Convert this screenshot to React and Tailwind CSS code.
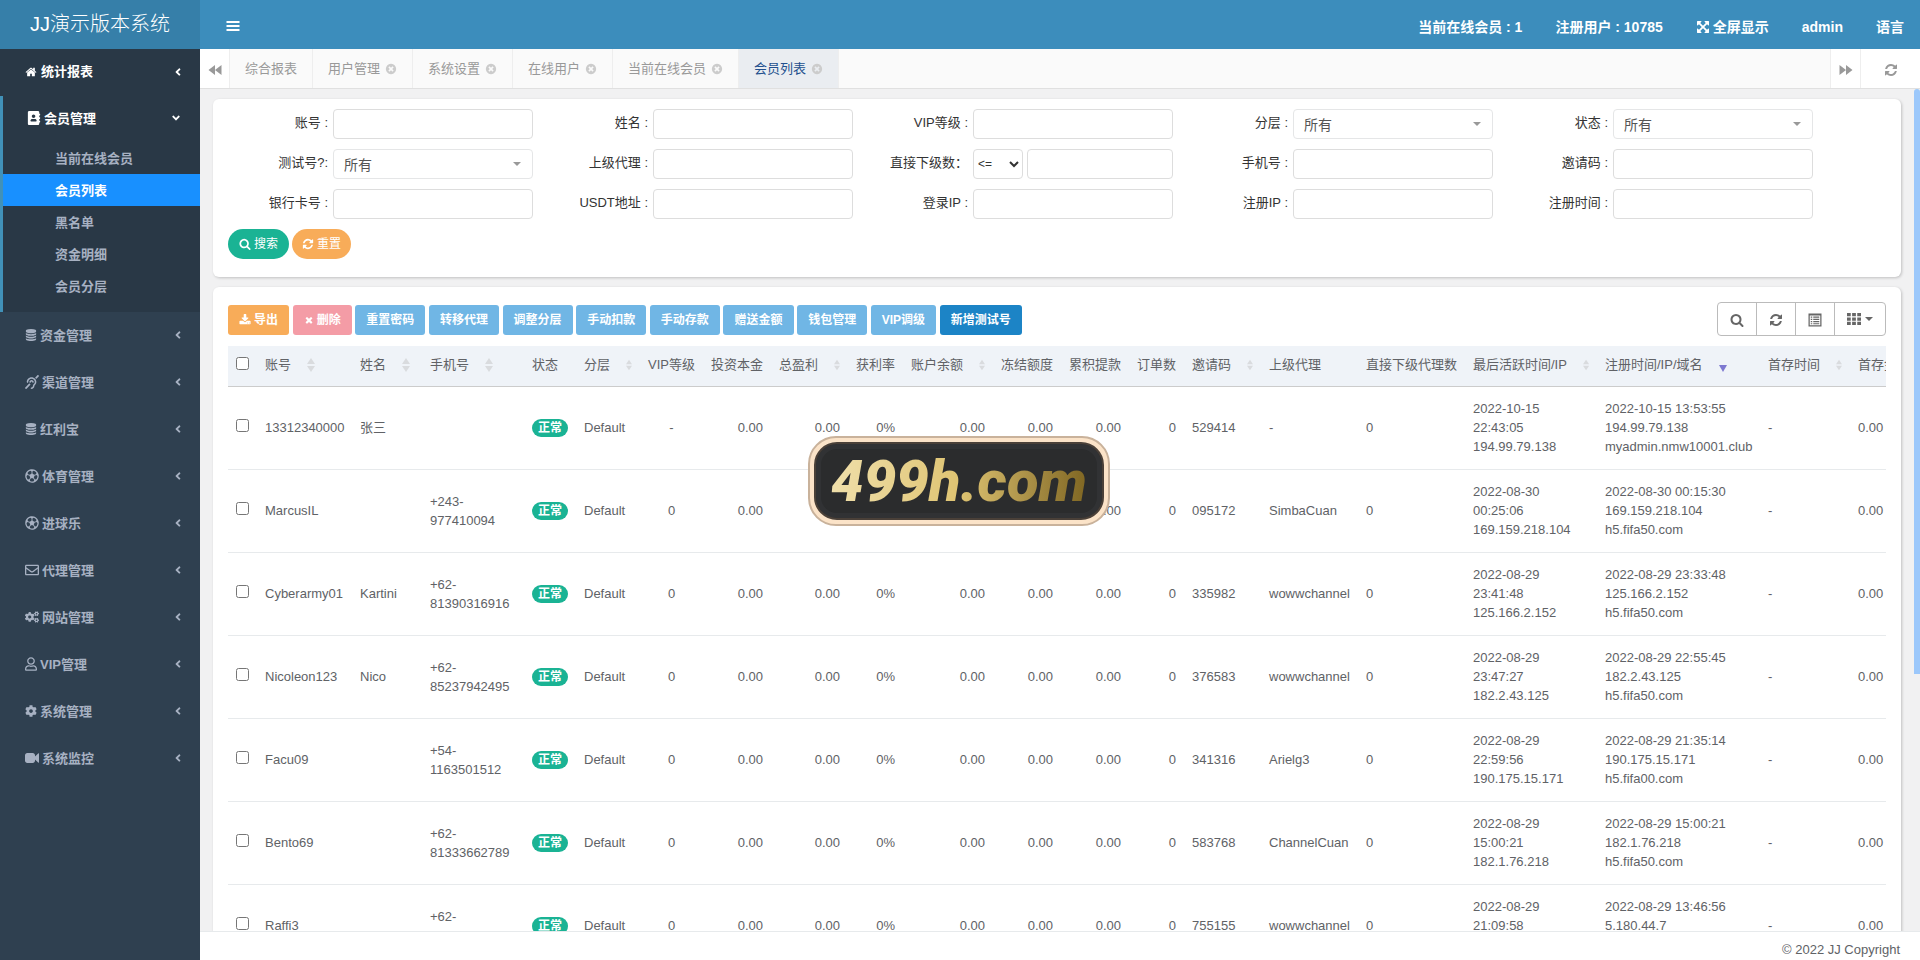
import { clsx } from 'clsx';
import {
  FaAddressBook, FaAngleDown, FaAngleLeft, FaCog, FaCogs, FaDeaf, FaRegEnvelope, FaRegFutbol, FaRegUser,
} from 'react-icons/fa';

const PATHS = {
  home: 'M1472 992v480q0 26-19 45t-45 19h-384v-384h-256v384h-384q-26 0-45-19t-19-45v-480q0-1 .5-3t.5-3l575-474 575 474q1 2 1 6zm223-69l-62 74q-8 9-21 11h-3q-13 0-21-7l-692-577-692 577q-12 8-24 7-13-2-21-11l-62-74q-8-10-7-23.5t11-21.5l719-599q32-26 76-26t76 26l244 204v-195q0-14 9-23t23-9h192q14 0 23 9t9 23v408l219 182q10 8 11 21.5t-7 23.5z',
  refresh: 'M1639 1056q0 5-1 7-64 268-268 434.5t-478 166.5q-146 0-282.5-55t-243.5-157l-129 129q-19 19-45 19t-45-19-19-45v-448q0-26 19-45t45-19h448q26 0 45 19t19 45-19 45l-137 137q71 66 161 102t187 36q134 0 250-65t186-179q11-17 53-117 8-23 30-23h192q13 0 22.5 9.5t9.5 22.5zm25-800v448q0 26-19 45t-45 19h-448q-26 0-45-19t-19-45 19-45l138-138q-148-137-349-137-134 0-250 65t-186 179q-11 17-53 117-8 23-30 23h-199q-13 0-22.5-9.5t-9.5-22.5v-7q65-268 270-434.5t480-166.5q146 0 284 55.5t245 156.5l130-129q19-19 45-19t45 19 19 45z',
  search: 'M1216 832q0-185-131.5-316.5t-316.5-131.5-316.5 131.5-131.5 316.5 131.5 316.5 316.5 131.5 316.5-131.5 131.5-316.5zm512 832q0 52-38 90t-90 38q-54 0-90-38l-343-342q-179 124-399 124-143 0-273.5-55.5t-225-150-150-225-55.5-273.5 55.5-273.5 150-225 225-150 273.5-55.5 273.5 55.5 225 150 150 225 55.5 273.5q0 220-124 399l343 343q37 37 37 90z',
  times: 'M1490 1322q0 40-28 68l-136 136q-28 28-68 28t-68-28l-294-294-294 294q-28 28-68 28t-68-28l-136-136q-28-28-28-68t28-68l294-294-294-294q-28-28-28-68t28-68l136-136q28-28 68-28t68 28l294 294 294-294q28-28 68-28t68 28l136 136q28 28 28 68t-28 68l-294 294 294 294q28 28 28 68z',
  timesCircle: 'M1277 1122q0-26-19-45l-181-181 181-181q19-19 19-45 0-27-19-46l-90-90q-19-19-46-19-26 0-45 19l-181 181-181-181q-19-19-45-19-27 0-46 19l-90 90q-19 19-19 46 0 26 19 45l181 181-181 181q-19 19-19 45 0 27 19 46l90 90q19 19 46 19 26 0 45-19l181-181 181 181q19 19 45 19 27 0 46-19l90-90q19-19 19-46zm387-226q0 209-103 385.5t-279.5 279.5-385.5 103-385.5-103-279.5-279.5-103-385.5 103-385.5 279.5-279.5 385.5-103 385.5 103 279.5 279.5 103 385.5z',
  download: 'M1344 1344q0-26-19-45t-45-19-45 19-19 45 19 45 45 19 45-19 19-45zm256 0q0-26-19-45t-45-19-45 19-19 45 19 45 45 19 45-19 19-45zm128-224v320q0 40-28 68t-68 28h-1472q-40 0-68-28t-28-68v-320q0-40 28-68t68-28h465l135 136q58 56 136 56t136-56l136-136h464q40 0 68 28t28 68zm-325-569q17 41-14 70l-448 448q-18 19-45 19t-45-19l-448-448q-31-29-14-70 17-39 59-39h256v-448q0-26 19-45t45-19h256q26 0 45 19t19 45v448h256q42 0 59 39z',
  database: 'M896 768q237 0 443-43t325-127v170q0 69-103 128t-280 93.5-385 34.5-385-34.5-280-93.5-103-128v-170q119 84 325 127t443 43zm0 768q237 0 443-43t325-127v170q0 69-103 128t-280 93.5-385 34.5-385-34.5-280-93.5-103-128v-170q119 84 325 127t443 43zm0-384q237 0 443-43t325-127v170q0 69-103 128t-280 93.5-385 34.5-385-34.5-280-93.5-103-128v-170q119 84 325 127t443 43zm0-1152q208 0 385 34.5t280 93.5 103 128v128q0 69-103 128t-280 93.5-385 34.5-385-34.5-280-93.5-103-128v-128q0-69 103-128t280-93.5 385-34.5z',
  arrowsAlt: 'M1411 541l-355 355 355 355 144-144q29-31 70-14 39 17 39 59v448q0 26-19 45t-45 19h-448q-42 0-59-40-17-39 14-69l144-144-355-355-355 355 144 144q31 30 14 69-17 40-59 40h-448q-26 0-45-19t-19-45v-448q0-42 40-59 39-17 69 14l144 144 355-355-355-355-144 144q-19 19-45 19-12 0-24-5-40-17-40-59v-448q0-26 19-45t45-19h448q42 0 59 40 17 39-14 69l-144 144 355 355 355-355-144-144q-31-30-14-69 17-40 59-40h448q26 0 45 19t19 45v448q0 42-39 59-13 5-25 5-26 0-45-19z',
  video: 'M1792 352v1088q0 42-39 59-13 5-25 5-27 0-45-19l-403-403v166q0 119-84.5 203.5t-203.5 84.5h-704q-119 0-203.5-84.5t-84.5-203.5v-704q0-119 84.5-203.5t203.5-84.5h704q119 0 203.5 84.5t84.5 203.5v165l403-402q18-19 45-19 12 0 25 5 39 17 39 59z',
  backward: 'M896 256v1280l-832-640zM1728 256v1280l-832-640z',
  forward: 'M64 256v1280l832-640zM896 256v1280l832-640z',
  bars: 'M64 256h1664v256h-1664zM64 768h1664v256h-1664zM64 1280h1664v256h-1664z',
  th: 'M0 128h480v416h-480zM656 128h480v416h-480zM1312 128h480v416h-480zM0 688h480v416h-480zM656 688h480v416h-480zM1312 688h480v416h-480zM0 1248h480v416h-480zM656 1248h480v416h-480zM1312 1248h480v416h-480z',
  listAlt: 'M64 64h1664v1664h-1664zM224 320v1248h1344v-1248zM352 448h192v160h-192zM672 448h768v160h-768zM352 736h192v160h-192zM672 736h768v160h-768zM352 1024h192v160h-192zM672 1024h768v160h-768zM352 1312h192v128h-192zM672 1312h768v128h-768z',
};

const Icon = ({ name, className }) => (
  <svg viewBox="0 0 1792 1792" fill="currentColor" fillRule={name === 'listAlt' ? 'evenodd' : 'nonzero'} className={clsx('inline-block shrink-0', className)} aria-hidden="true">
    <path d={PATHS[name]} />
  </svg>
);

const Caret = ({ className }) => (
  <svg viewBox="0 0 8 4" fill="currentColor" className={clsx('w-2 h-1', className)} aria-hidden="true">
    <path d="M0 0h8L4 4z" />
  </svg>
);

const subMenu = ['当前在线会员', '会员列表', '黑名单', '资金明细', '会员分层'];

const menu = [
  { label: '资金管理', icon: <Icon name="database" className="w-3 h-3.5" /> },
  { label: '渠道管理', icon: <FaDeaf className="w-3.5 h-3.5" /> },
  { label: '红利宝', icon: <Icon name="database" className="w-3 h-3.5" /> },
  { label: '体育管理', icon: <FaRegFutbol className="w-3.5 h-3.5" /> },
  { label: '进球乐', icon: <FaRegFutbol className="w-3.5 h-3.5" /> },
  { label: '代理管理', icon: <FaRegEnvelope className="w-3.5 h-3.5" /> },
  { label: '网站管理', icon: <FaCogs className="w-3.5 h-3.5" /> },
  { label: 'VIP管理', icon: <FaRegUser className="w-3 h-3.5" /> },
  { label: '系统管理', icon: <FaCog className="w-3 h-3" /> },
  { label: '系统监控', icon: <Icon name="video" className="w-3.5 h-3.5" /> },
];

const tabs = ['综合报表', '用户管理', '系统设置', '在线用户', '当前在线会员', '会员列表'];

const fields = [
  { label: '账号 :' },
  { label: '姓名 :' },
  { label: 'VIP等级 :' },
  { label: '分层 :', type: 'select' },
  { label: '状态 :', type: 'select' },
  { label: '测试号?:', type: 'select' },
  { label: '上级代理 :' },
  { label: '直接下级数：', type: 'compare' },
  { label: '手机号 :' },
  { label: '邀请码 :' },
  { label: '银行卡号 :' },
  { label: 'USDT地址 :' },
  { label: '登录IP :' },
  { label: '注册IP :' },
  { label: '注册时间 :' },
];

const bulkActions = ['重置密码', '转移代理', '调整分层', '手动扣款', '手动存款', '赠送金额', '钱包管理', 'VIP调级'];

const columns = [
  { key: 'account', title: '账号', width: 95, sort: 'both' },
  { key: 'name', title: '姓名', width: 70, sort: 'both' },
  { key: 'phone', title: '手机号', width: 102, sort: 'both' },
  { key: 'status', title: '状态', width: 52 },
  { key: 'level', title: '分层', width: 64, sort: 'both' },
  { key: 'vip', title: 'VIP等级', width: 63, align: 'text-center' },
  { key: 'principal', title: '投资本金', width: 68, align: 'text-right' },
  { key: 'profit', title: '总盈利', width: 77, align: 'text-right', sort: 'both' },
  { key: 'rate', title: '获利率', width: 55, align: 'text-right' },
  { key: 'balance', title: '账户余额', width: 90, align: 'text-right', sort: 'both' },
  { key: 'frozen', title: '冻结额度', width: 68, align: 'text-right' },
  { key: 'withdrawn', title: '累积提款', width: 68, align: 'text-right' },
  { key: 'orders', title: '订单数', width: 55, align: 'text-right' },
  { key: 'code', title: '邀请码', width: 77, sort: 'both' },
  { key: 'agent', title: '上级代理', width: 97 },
  { key: 'subs', title: '直接下级代理数', width: 107 },
  { key: 'active', title: '最后活跃时间/IP', width: 132, sort: 'both' },
  { key: 'registered', title: '注册时间/IP/域名', width: 163, sort: 'desc' },
  { key: 'firstTime', title: '首存时间', width: 90, sort: 'both' },
  { key: 'firstAmount', title: '首存金额', width: 90 },
];

const base = {
  phone: '', name: '', vip: '0', level: 'Default', principal: '0.00', profit: '0.00', rate: '0%', balance: '0.00',
  frozen: '0.00', withdrawn: '0.00', orders: '0', subs: '0', firstTime: '-', firstAmount: '0.00',
};

const rows = [
  { ...base, account: '13312340000', name: '张三', vip: '-', code: '529414', agent: '-', active: '2022-10-15\n22:43:05\n194.99.79.138', registered: '2022-10-15 13:53:55\n194.99.79.138\nmyadmin.nmw10001.club' },
  { ...base, account: 'MarcusIL', phone: '+243-\n977410094', code: '095172', agent: 'SimbaCuan', active: '2022-08-30\n00:25:06\n169.159.218.104', registered: '2022-08-30 00:15:30\n169.159.218.104\nh5.fifa50.com' },
  { ...base, account: 'Cyberarmy01', name: 'Kartini', phone: '+62-\n81390316916', code: '335982', agent: 'wowwchannel', active: '2022-08-29\n23:41:48\n125.166.2.152', registered: '2022-08-29 23:33:48\n125.166.2.152\nh5.fifa50.com' },
  { ...base, account: 'Nicoleon123', name: 'Nico', phone: '+62-\n85237942495', code: '376583', agent: 'wowwchannel', active: '2022-08-29\n23:47:27\n182.2.43.125', registered: '2022-08-29 22:55:45\n182.2.43.125\nh5.fifa50.com' },
  { ...base, account: 'Facu09', phone: '+54-\n1163501512', code: '341316', agent: 'Arielg3', active: '2022-08-29\n22:59:56\n190.175.15.171', registered: '2022-08-29 21:35:14\n190.175.15.171\nh5.fifa00.com' },
  { ...base, account: 'Bento69', phone: '+62-\n81333662789', code: '583768', agent: 'ChannelCuan', active: '2022-08-29\n15:00:21\n182.1.76.218', registered: '2022-08-29 15:00:21\n182.1.76.218\nh5.fifa50.com' },
  { ...base, account: 'Raffi3', phone: '+62-\n81382042424', code: '755155', agent: 'wowwchannel', active: '2022-08-29\n21:09:58\n5.180.44.7', registered: '2022-08-29 13:46:56\n5.180.44.7\nh5.fifa50.com' },
];

const Sidebar = () => (
  <aside className="w-[200px] shrink-0 bg-[#2f4050] text-[#a7b1c2] font-bold">
    <a href="#" className="flex items-center justify-center h-[49px] pb-0.5 bg-[#367fa9] text-white text-xl font-light">JJ演示版本系统</a>
    <nav>
      <a href="#" className="flex items-center h-[47px] pl-[25px] pr-[18px] pb-0.5 bg-[#293846] text-white">
        <Icon name="home" className="w-3 h-3.5 mr-1" />
        统计报表
        <FaAngleLeft className="w-2 h-3 ml-auto" />
      </a>
      <div className="border-l-[3px] border-[#4191b8] bg-[#293846] pb-2.5">
        <a href="#" className="flex items-center h-[46px] pl-6 pr-[18px] pb-0.5 text-white">
          <FaAddressBook className="w-3.5 h-3.5 mr-[3px]" />
          会员管理
          <FaAngleDown className="w-3 h-3 ml-auto" />
        </a>
        {subMenu.map((item) => (
          <a
            key={item}
            href="#"
            className={clsx('flex items-center h-8 pl-[52px]', item === '会员列表' && 'bg-[#1890ff] text-white')}
          >
            {item}
          </a>
        ))}
      </div>
      {menu.map(({ label, icon }) => (
        <a key={label} href="#" className="flex items-center gap-[3px] h-[47px] pl-[25px] pr-[18px] pb-px">
          {icon}
          {label}
          <FaAngleLeft className="w-2 h-3 ml-auto" />
        </a>
      ))}
    </nav>
  </aside>
);

const Header = () => (
  <header className="flex items-center justify-between h-[49px] shrink-0 bg-[#3c8dbc] text-white pl-5 pr-4">
    <button type="button" aria-label="菜单" className="px-1.5"><Icon name="bars" className="block w-3.5 h-3.5" /></button>
    <div className="flex items-center gap-[33px] pt-1 text-sm font-bold">
      <span>当前在线会员 : 1</span>
      <span>注册用户 : 10785</span>
      <a href="#" className="flex items-center gap-[3px]"><Icon name="arrowsAlt" className="w-3.5 h-3.5" />全屏显示</a>
      <a href="#">admin</a>
      <a href="#">语言</a>
    </div>
  </header>
);

const TabBar = () => (
  <div className="flex h-10 shrink-0 bg-[#fafafa] border-b border-[#e0e0e0] text-[#999]">
    <button type="button" aria-label="向左" className="w-[30px] bg-white border-r border-[#eee]">
      <Icon name="backward" className="w-3.5 h-4" />
    </button>
    {tabs.map((tab, i) => (
      <a
        key={tab}
        href="#"
        className={clsx(
          'flex items-center gap-[5px] px-[15px] border-r border-[#eee]',
          tab === '会员列表' && 'bg-[#eaedf1] text-[#23508e]',
        )}
      >
        {tab}
        {i > 0 && <Icon name="timesCircle" className="w-3 h-3.5 text-[#ccc]" />}
      </a>
    ))}
    <button type="button" aria-label="向右" className="w-[31px] ml-auto bg-white border-x border-[#eee]">
      <Icon name="forward" className="w-3.5 h-4" />
    </button>
    <button type="button" aria-label="刷新" className="w-[59px] bg-white">
      <Icon name="refresh" className="w-3.5 h-3.5" />
    </button>
  </div>
);

const inputClass = 'h-[30px] min-w-0 border border-[#ddd] rounded bg-white px-2 outline-none';

const Field = ({ label, type, id }) => (
  <div className="flex w-[320px] pr-[15px] gap-[5px]">
    <label htmlFor={id} className="w-[100px] shrink-0 pt-1 text-right text-[#333] whitespace-nowrap">{label}</label>
    {type === 'select' && (
      <div className="relative flex-1">
        <select id={id} className="w-full h-[30px] pl-2.5 pt-0.5 appearance-none border border-[#e5e6e7] rounded bg-white text-sm text-[#555] outline-none">
          <option>所有</option>
        </select>
        <Caret className="absolute right-3 top-[13px] text-[#999] pointer-events-none" />
      </div>
    )}
    {type === 'compare' && (
      <div className="flex flex-1 min-w-0 gap-1">
        <select aria-label="比较" className="w-[50px] shrink-0 h-[30px] border border-[#ddd] rounded bg-white text-xs text-[#333] outline-none">
          <option>&lt;=</option>
        </select>
        <input id={id} type="text" className={clsx(inputClass, 'flex-1')} />
      </div>
    )}
    {!type && <input id={id} type="text" className={clsx(inputClass, 'flex-1')} />}
  </div>
);

const SearchCard = () => (
  <form className="bg-white rounded-md shadow-[1px_1px_3px_rgba(0,0,0,0.2)] px-[15px] pt-2.5 pb-[18px]">
    <div className="flex flex-wrap gap-y-2.5">
      {fields.map((field, i) => (
        <Field key={field.label} id={`field-${i}`} {...field} />
      ))}
    </div>
    <div className="flex gap-[3px] mt-2.5 text-xs text-white">
      <button type="button" className="flex items-center gap-[3px] h-[30px] px-[11px] rounded-full bg-[#1ab394]">
        <Icon name="search" className="w-3 h-3" />搜索
      </button>
      <button type="button" className="flex items-center gap-[3px] h-[30px] px-2.5 rounded-full bg-[#f8ac59]">
        <Icon name="refresh" className="w-3 h-3" />重置
      </button>
    </div>
  </form>
);

const SortIcon = ({ sort }) => (
  <svg viewBox="0 0 8 14" className={clsx('inline-block w-2 h-3.5 ml-4', sort === 'desc' ? 'text-[#7d78d0]' : 'text-[#d9dbde]')} fill="currentColor" aria-hidden="true">
    {sort === 'both' && <path d="M4 0l4 6H0z" />}
    <path d={sort === 'both' ? 'M4 14l4-6H0z' : 'M4 14l4-7H0z'} />
  </svg>
);

const btn = 'inline-block h-[30px] px-[11px] rounded-[3px] text-xs text-white font-bold align-top';

const Toolbar = () => (
  <div className="flex items-start justify-between mb-2.5">
    <div className="pt-[3px]">
      <button type="button" className={clsx(btn, 'bg-[#f8ac59]')}>
        <span className="flex items-center gap-[3px]"><Icon name="download" className="w-3 h-3" />导出</span>
      </button>{' '}
      <button type="button" className={clsx(btn, 'bg-[#f49ca6]')}>
        <span className="flex items-center gap-[3px]"><Icon name="times" className="w-2.5 h-3" />删除</span>
      </button>{' '}
      {bulkActions.map((label) => [
        <button key={label} type="button" className={clsx(btn, 'bg-[#70b6e5]')}>{label}</button>,
        ' ',
      ])}
      <button type="button" className={clsx(btn, 'bg-[#1c84c6]')}>新增测试号</button>
    </div>
    <div className="flex h-[34px] border border-[#bbb] rounded divide-x divide-[#bbb] text-[#666]">
      <button type="button" aria-label="搜索" className="w-[39px]"><Icon name="search" className="w-3.5 h-3.5" /></button>
      <button type="button" aria-label="刷新" className="w-[39px]"><Icon name="refresh" className="w-3.5 h-3.5" /></button>
      <button type="button" aria-label="切换" className="w-[39px]"><Icon name="listAlt" className="w-3.5 h-3.5" /></button>
      <button type="button" aria-label="列" className="flex items-center justify-center gap-1 w-[50px]">
        <Icon name="th" className="w-3.5 h-3.5" />
        <Caret />
      </button>
    </div>
  </div>
);

const MemberTable = () => (
  <div className="overflow-hidden">
    <table className="w-[1712px] table-fixed text-[#606266]">
      <colgroup>
        <col className="w-[29px]" />
        {columns.map((col) => <col key={col.key} style={{ width: col.width }} />)}
      </colgroup>
      <thead className="bg-[#eff3f8]">
        <tr className="h-10 border-b border-[#ccc]">
          <th className="pl-2 pb-1 text-left"><input type="checkbox" aria-label="全选" className="block w-[13px] h-[13px]" /></th>
          {columns.map((col) => (
            <th key={col.key} className="px-2 pb-0.5 text-left font-normal whitespace-nowrap">
              <span className="flex items-center">
                {col.title}
                {col.sort && <SortIcon sort={col.sort} />}
              </span>
            </th>
          ))}
        </tr>
      </thead>
      <tbody>
        {rows.map((row) => (
          <tr key={row.account} className="h-[83px] border-b border-[#e7eaec]">
            <td className="pl-2 pb-1"><input type="checkbox" aria-label={row.account} className="block w-[13px] h-[13px]" /></td>
            {columns.map((col) => (
              <td key={col.key} className={clsx('px-2 whitespace-pre', col.align)}>
                {col.key === 'status'
                  ? <span className="block w-9 rounded-full bg-[#1ab394] text-center text-xs leading-[18px] font-bold text-white">正常</span>
                  : row[col.key]}
              </td>
            ))}
          </tr>
        ))}
      </tbody>
    </table>
  </div>
);

const Watermark = () => (
  <div className="absolute left-[808px] top-[436px] w-[302px] h-[90px] rounded-[28px] border-2 border-[#c9b29b] bg-[#fbe3c8] p-1">
    <div className="flex items-center justify-center h-full rounded-[23px] border-2 border-[#4a4038] bg-[#2b2c2d] shadow-[inset_0_0_0_5px_#313234]">
      <span className="bg-gradient-to-r from-[#f0e0ac] via-[#dfc472] to-[#7d6420] bg-clip-text px-1 text-[58px] leading-[74px] font-black italic text-transparent font-['Roboto','Liberation_Sans',sans-serif]">
        499h.com
      </span>
    </div>
  </div>
);

export default function App() {
  return (
    <div className="relative flex h-screen overflow-hidden bg-[#f1f1f2] text-[13px] leading-[19px] font-['Liberation_Sans','Noto_Sans_CJK_SC',sans-serif]">
      <Sidebar />
      <div className="flex flex-col flex-1 min-w-0">
        <Header />
        <TabBar />
        <div className="flex flex-1 min-h-0">
          <main className="flex-1 min-w-0 overflow-hidden pl-[13px] pr-[13px] pt-2.5">
            <SearchCard />
            <section className="mt-2.5 bg-white rounded-md shadow-[1px_1px_3px_rgba(0,0,0,0.2)] p-[15px]">
              <Toolbar />
              <MemberTable />
            </section>
          </main>
          <div className="w-1.5 h-[585px] rounded-t-full bg-[#9cc8fb]" />
        </div>
        <footer className="h-[29px] shrink-0 border-t border-[#e7eaec] bg-white pr-5 pt-2 text-right text-[#606266]">
          © 2022 JJ Copyright
        </footer>
      </div>
      <Watermark />
    </div>
  );
}
